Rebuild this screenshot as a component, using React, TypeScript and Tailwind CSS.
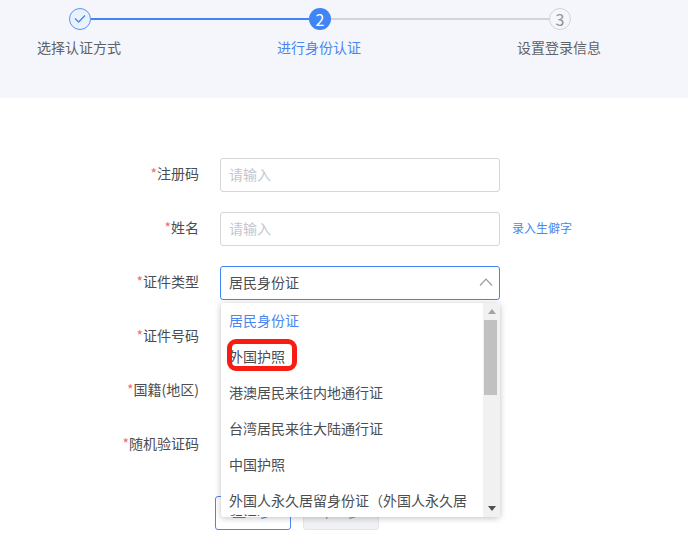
import { useState } from "react";

const FONT = "font-['Noto_Sans_CJK_SC','Noto_Sans',sans-serif]";

const STEPS = [
  { label: "选择认证方式", state: "done" },
  { label: "进行身份认证", state: "active" },
  { label: "设置登录信息", state: "todo" },
];

const ID_TYPES = [
  "居民身份证",
  "外国护照",
  "港澳居民来往内地通行证",
  "台湾居民来往大陆通行证",
  "中国护照",
  "外国人永久居留身份证（外国人永久居留证）",
];

function StepDot({ state, index }: { state: string; index: number }) {
  if (state === "done") {
    return (
      <div className="flex h-[22px] w-[22px] items-center justify-center rounded-full border border-[#5a93f5] bg-[#eaf2fe]">
        <svg width="12" height="10" viewBox="0 0 12 10" fill="none" stroke="#4a86f0" strokeWidth="1.3">
          <path d="M1 4.5 L4.6 8 L11 1.5" />
        </svg>
      </div>
    );
  }
  if (state === "active") {
    return (
      <div className="flex h-[22px] w-[22px] items-center justify-center rounded-full bg-[#3f85f5] text-base leading-none text-white">
        {index + 1}
      </div>
    );
  }
  return (
    <div className="flex h-[22px] w-[22px] items-center justify-center rounded-full border border-[#d2d4da] text-base leading-none text-[#8f9298]">
      {index + 1}
    </div>
  );
}

function Stepper() {
  return (
    <div className="h-[98px] bg-[#f4f6fb] pt-2">
      <div className="ml-[69px] flex h-[22px] w-[502px] items-center">
        <StepDot state="done" index={0} />
        <div className="h-0.5 flex-1 bg-[#3f85f5]" />
        <StepDot state="active" index={1} />
        <div className="h-0.5 flex-1 bg-[#d2d4da]" />
        <StepDot state="todo" index={2} />
      </div>
      <div className="mt-[7px] ml-[-41px] grid w-[720px] grid-cols-3 text-center text-sm leading-5">
        {STEPS.map((s) => (
          <div key={s.label} className={s.state === "active" ? "text-[#4a86f0]" : "text-[#606266]"}>
            {s.label}
          </div>
        ))}
      </div>
    </div>
  );
}

function Row({ label, children }: { label: string; children?: React.ReactNode }) {
  return (
    <div className="flex h-[34px] items-center">
      <div className="w-[199px] pb-1 text-right text-sm text-[#4a4d52]">
        <span className="text-[#f56c6c]">*</span>
        {label}
      </div>
      <div className="ml-[21px] flex items-center">{children}</div>
    </div>
  );
}

function TextInput({ placeholder }: { placeholder: string }) {
  return (
    <input
      placeholder={placeholder}
      className="h-[34px] w-[280px] rounded-[3px] border border-[#d6d7db] bg-white px-2 pb-[2px] text-sm outline-none placeholder:text-[#c4c6cb]"
    />
  );
}

function Dropdown({ value }: { value: string }) {
  return (
    <div className="absolute left-px top-[37px] z-10 flex h-[214px] w-[279px] overflow-hidden rounded-[3px] bg-white shadow-[0_1px_6px_rgba(0,0,0,0.25)]">
      <div className="-mt-px h-full flex-1 overflow-hidden">
        {ID_TYPES.map((t) => (
          <div
            key={t}
            className={`w-[261px] px-2 py-2 text-sm leading-5 ${t === value ? "text-[#4a86f0]" : "text-[#4a4d52]"}`}
          >
            {t}
          </div>
        ))}
      </div>
      <div className="flex h-full w-[17px] flex-col items-center justify-between bg-[#f1f1f1] py-[6px]">
        <svg width="8" height="5" viewBox="0 0 8 5" fill="#a3a3a3">
          <path d="M4 0 L8 5 L0 5 Z" />
        </svg>
        <div className="absolute right-[3px] top-[17px] h-[75px] w-[13px] bg-[#c1c1c1]" />
        <svg width="8" height="5" viewBox="0 0 8 5" fill="#505050">
          <path d="M0 0 L8 0 L4 5 Z" />
        </svg>
      </div>
    </div>
  );
}

export default function App() {
  const [idType] = useState("居民身份证");

  return (
    <div className={`h-[555px] w-[688px] overflow-hidden bg-white ${FONT}`}>
      <Stepper />
      <div className="relative flex flex-col gap-5 pt-[60px]">
        <Row label="注册码">
          <TextInput placeholder="请输入" />
        </Row>
        <Row label="姓名">
          <TextInput placeholder="请输入" />
          <a className="ml-3 pb-[2px] text-xs text-[#4a86f0]">录入生僻字</a>
        </Row>
        <Row label="证件类型">
          <div className="relative">
            <div className="flex h-[34px] w-[280px] items-center justify-between rounded-[3px] border border-[#3f85f5] bg-white pb-[2px] pl-2 pr-[6px] text-sm text-[#4a4d52]">
              <span>{idType}</span>
              <svg width="14" height="8" viewBox="0 0 14 8" fill="none" stroke="#9a9ca1" strokeWidth="1.2">
                <path d="M1 7.5 L7 1.2 L13 7.5" />
              </svg>
            </div>
            <Dropdown value={idType} />
            {/* red mark drawn over the second option */}
            <div className="absolute left-[7px] top-[73px] z-20 h-8 w-[70px] rounded-[9px] border-[5px] border-[#f81d12]" />
          </div>
        </Row>
        <Row label="证件号码" />
        <Row label="国籍(地区)" />
        <Row label="随机验证码" />
        <div className="ml-[215px] mt-[14px] flex gap-3">
          <button className="h-[34px] w-[76px] rounded-[3px] border border-[#4a86f0] bg-white pb-1 text-sm text-[#4a86f0]">上一步</button>
          <button className="h-[34px] w-[76px] rounded-[3px] border border-[#e3e5ea] bg-[#f0f1f5] pb-1 text-sm text-[#8f9298]">下一步</button>
        </div>
      </div>
    </div>
  );
}
